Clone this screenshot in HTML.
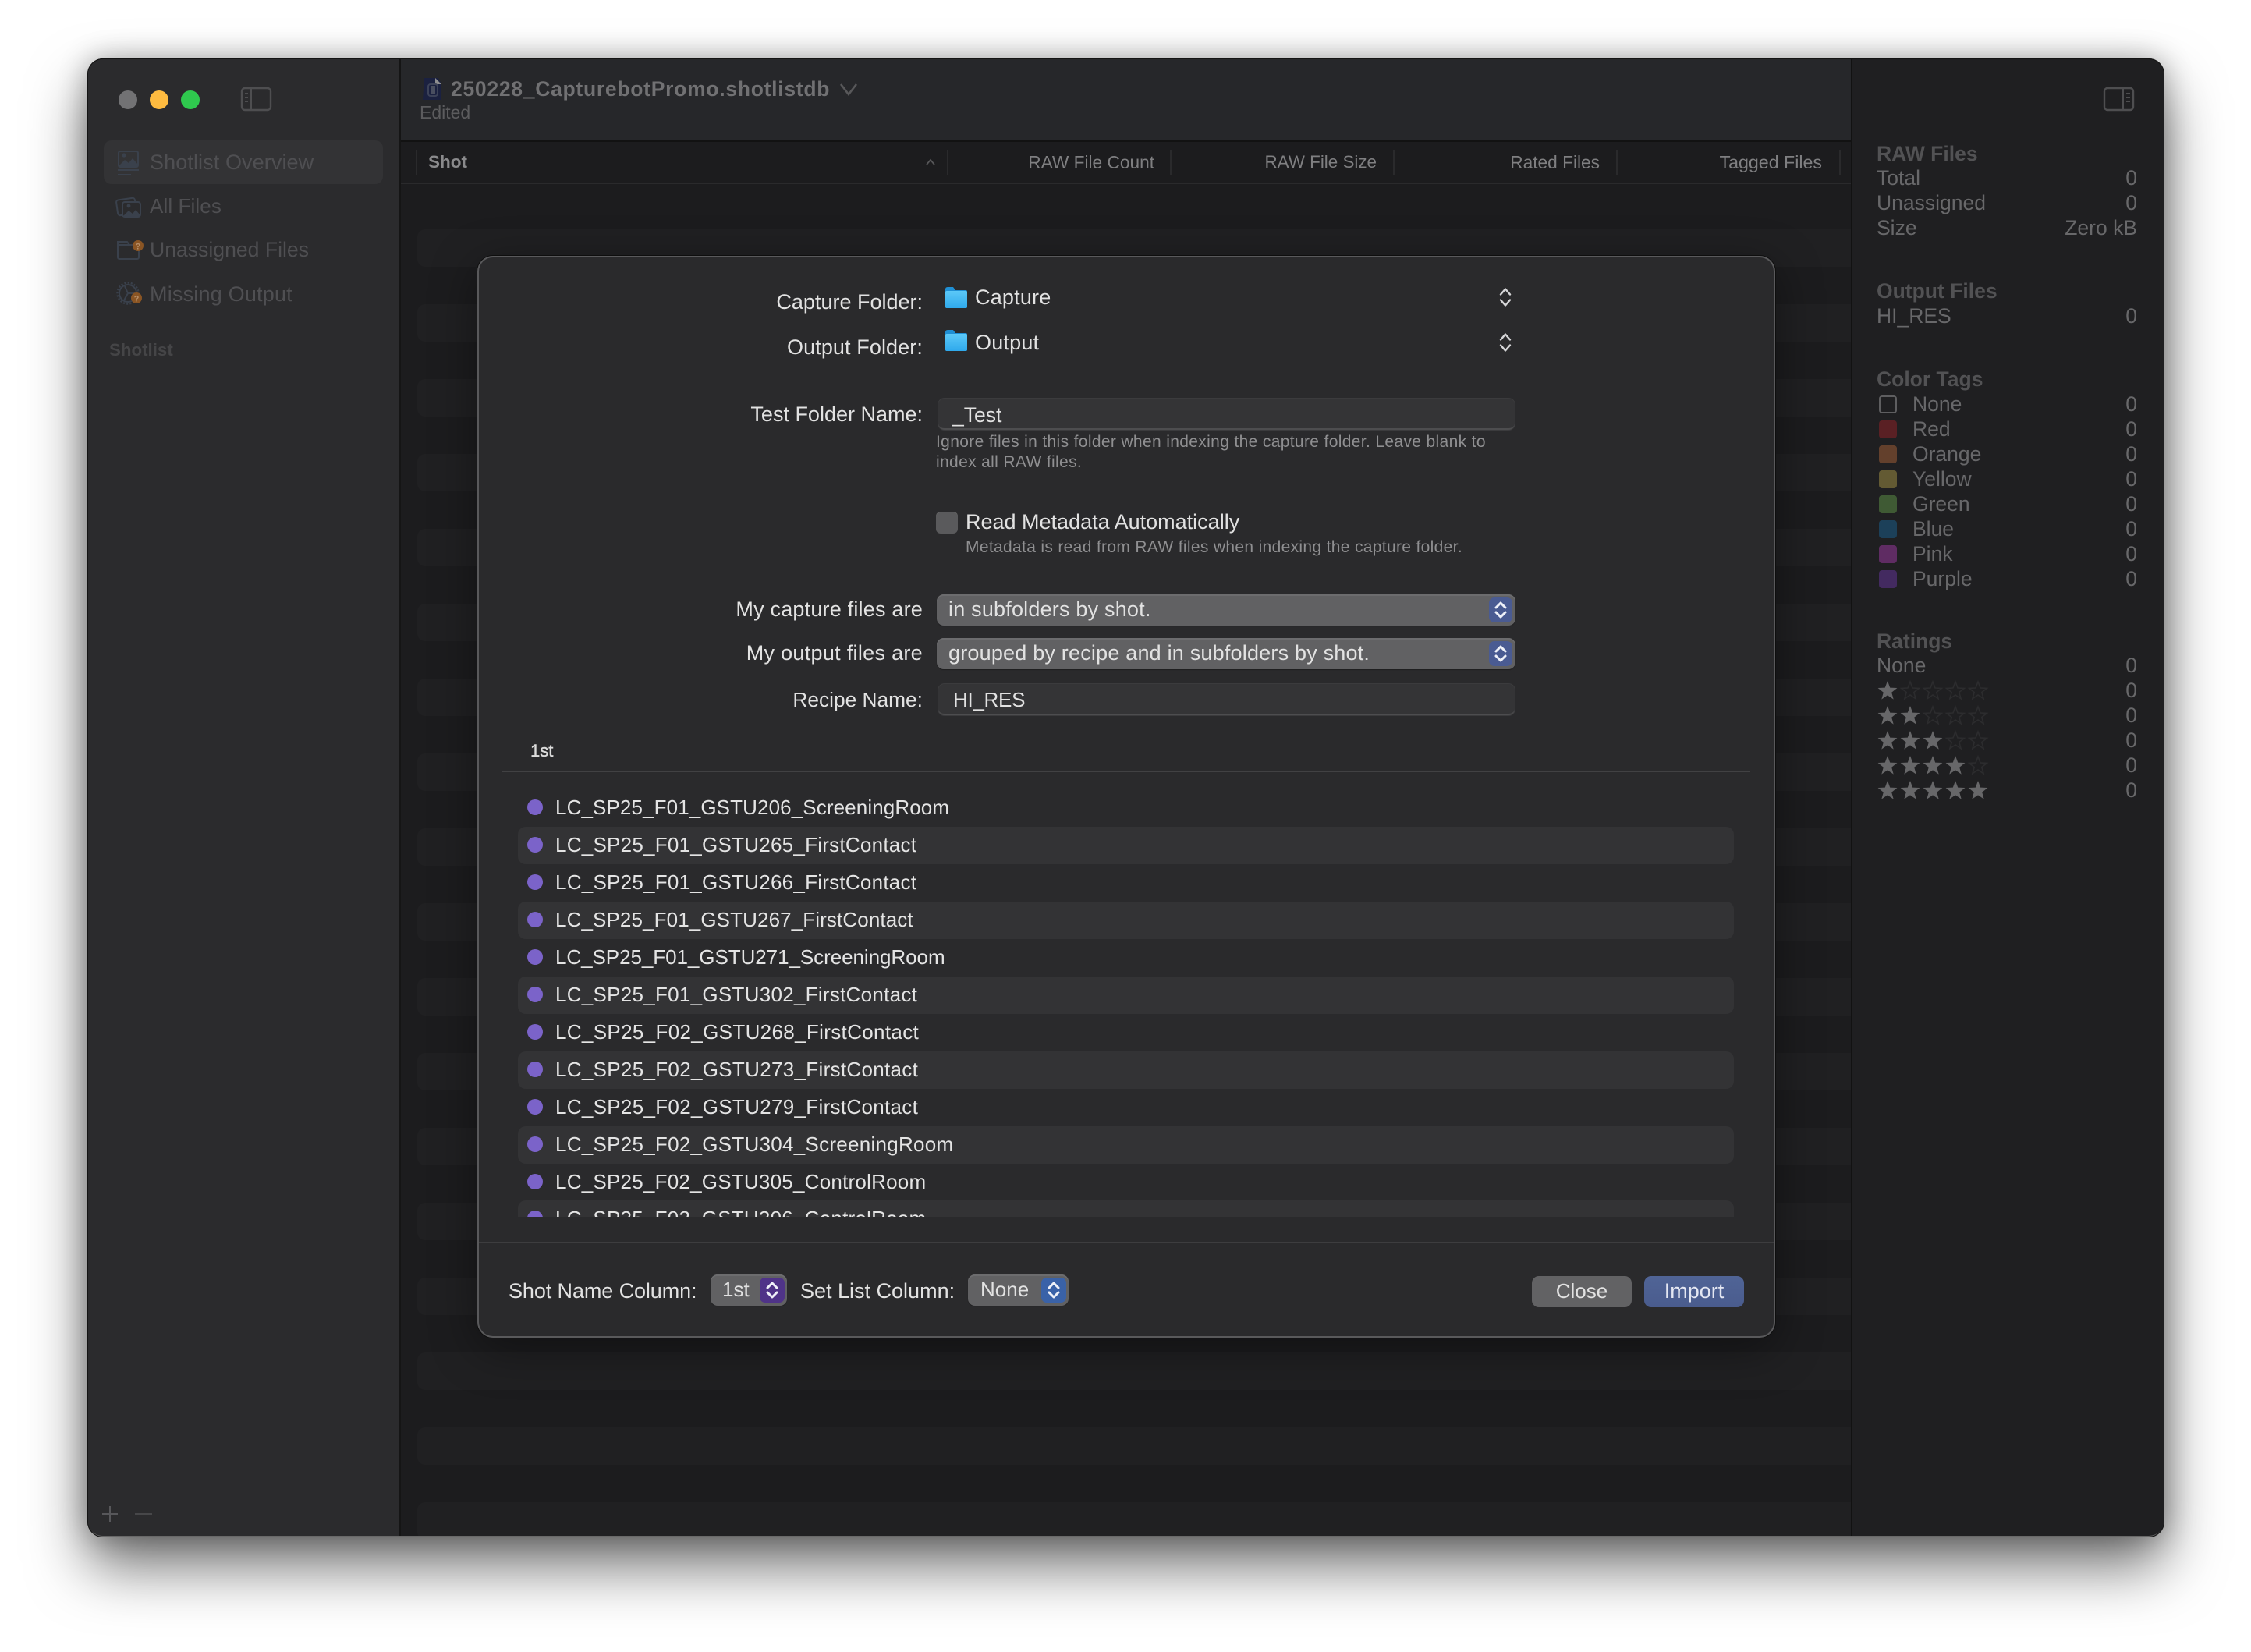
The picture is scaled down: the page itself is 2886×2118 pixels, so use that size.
<!DOCTYPE html>
<html><head><meta charset="utf-8"><title>Shotlist</title>
<style>
html,body{margin:0;padding:0;background:#fff;}
body{position:relative;width:2886px;height:2118px;overflow:hidden;font-family:"Liberation Sans",sans-serif;}
.abs{position:absolute;}
.t{position:absolute;white-space:nowrap;line-height:40px;height:40px;font-size:26px;}
.r{transform:translateX(-100%);}
#win{position:absolute;left:112px;top:75px;width:2663px;height:1896px;border-radius:20px;background:#1c1c1e;
box-shadow:0 38px 75px rgba(0,0,0,.55),0 0 36px rgba(0,0,0,.3);}
#clip{position:absolute;inset:0;border-radius:20px;overflow:hidden;}
#edge{position:absolute;inset:0;border-radius:20px;box-shadow:inset 0 0 0 1px #141414,inset 0 -3px 0 -1px #686868,inset 2px 0 0 -1px #555,inset -2px 0 0 -1px #555;}
#side{position:absolute;left:0;top:0;width:400px;height:100%;background:#2b2b2d;border-right:2px solid #151515;}
#bar{position:absolute;left:402px;top:0;width:1859px;height:105px;background:#26272a;border-bottom:2px solid #121212;}
#hdr{position:absolute;left:402px;top:107px;width:1859px;height:52px;background:#1c1c1e;border-bottom:2px solid #2a2a2c;}
#rp{position:absolute;left:2261px;top:0;width:402px;height:100%;background:#1f1f21;border-left:2px solid #121212;box-sizing:border-box;}
.st{position:absolute;left:423px;width:1838px;height:48px;background:#202022;border-radius:10px 0 0 10px;}
.sep{position:absolute;width:2px;height:32px;top:192px;background:#2a2a2c;}
.side{color:#4f4f52;font-size:27px;}
.hd{color:#7f7f81;font-size:22.7px;}
.rl{color:#68686a;font-size:26.5px;}
.rb{color:#525254;font-size:26.5px;font-weight:bold;}
.sw{position:absolute;left:2409px;width:23px;height:23px;border-radius:4px;}
#dlg{position:absolute;left:612px;top:328px;width:1664px;height:1387px;background:#2a2a2c;border-radius:20px;
box-shadow:0 0 0 1px #0e0e0e,inset 0 0 0 2px #59595b,0 14px 60px rgba(0,0,0,.4);}
.lb{color:#e2e2e2;font-size:27px;}
.field{position:absolute;left:1203px;width:739px;height:40px;box-sizing:border-box;background:#343436;border-radius:8px;border-bottom:2px solid #4d4d4f;box-shadow:0 0 0 1px #3b3b3d;}
.pop{position:absolute;height:40px;background:#616163;border-radius:9px;box-shadow:inset 0 2px 0 #6c6c6e,0 1px 1px rgba(0,0,0,.3);}
.btn{position:absolute;height:32px;top:4px;border-radius:7px;}
.sm{color:#8f8f91;font-size:21px;letter-spacing:.35px;}
#list{position:absolute;left:644px;top:1012px;width:1600px;height:548px;overflow:hidden;}
.row{position:absolute;left:20px;width:1559px;height:48px;border-radius:10px;}
.row.z{background:#333335;}
.row i{position:absolute;left:12px;top:13px;width:20px;height:20px;border-radius:50%;background:#7b63c9;}
.row span{position:absolute;left:48px;top:3px;line-height:40px;font-size:26px;color:#e4e4e4;white-space:nowrap;}
.ctl{position:absolute;left:0;top:0;}
</style></head>
<body>
<div id="win">
 <div id="clip">
  <div class="st" style="top:219px"></div><div class="st" style="top:315px"></div><div class="st" style="top:411px"></div><div class="st" style="top:507px"></div><div class="st" style="top:603px"></div><div class="st" style="top:699px"></div><div class="st" style="top:795px"></div><div class="st" style="top:891px"></div><div class="st" style="top:987px"></div><div class="st" style="top:1083px"></div><div class="st" style="top:1179px"></div><div class="st" style="top:1275px"></div><div class="st" style="top:1371px"></div><div class="st" style="top:1467px"></div><div class="st" style="top:1563px"></div><div class="st" style="top:1659px"></div><div class="st" style="top:1755px"></div><div class="st" style="top:1851px"></div>
  <div id="side"><div class="abs" style="left:21px;top:105px;width:358px;height:56px;background:#333335;border-radius:10px"></div></div>
  <div id="bar"></div>
  <div id="hdr"></div>
  <div id="rp"></div>
 </div>
 <div id="edge"></div>
</div>

<div class="t side" style="left:192px;top:188px;letter-spacing:.1px">Shotlist Overview</div>
<div class="t side" style="left:192px;top:244px;font-size:26px;letter-spacing:.1px">All Files</div>
<div class="t side" style="left:192px;top:300px;font-size:26.6px">Unassigned Files</div>
<div class="t side" style="left:192px;top:357px;letter-spacing:.2px">Missing Output</div>
<div class="t" style="left:140px;top:429px;font-size:22.3px;font-weight:bold;color:#454547">Shotlist</div>

<div class="t" style="left:578px;top:94px;font-weight:bold;color:#717173;font-size:26.5px;letter-spacing:.72px">250228_CapturebotPromo.shotlistdb</div>
<div class="t" style="left:538px;top:124px;font-size:23px;color:#5c5c5e">Edited</div>

<div class="sep" style="left:533px"></div><div class="sep" style="left:1214px"></div><div class="sep" style="left:1500px"></div><div class="sep" style="left:1786px"></div><div class="sep" style="left:2072px"></div><div class="sep" style="left:2358px"></div>
<div class="t" style="left:549px;top:188px;font-size:22.5px;font-weight:bold;color:#8a8a8c">Shot</div>
<div class="t hd r" style="left:1480px;top:188px">RAW File Count</div>
<div class="t hd r" style="left:1765px;top:188px;font-size:22.4px">RAW File Size</div>
<div class="t hd r" style="left:2051px;top:188px">Rated Files</div>
<div class="t hd r" style="left:2336px;top:188px;font-size:23.2px">Tagged Files</div>

<div class="t rb" style="left:2406px;top:177px">RAW Files</div>
<div class="t rl" style="left:2406px;top:208px">Total</div><div class="t rl r" style="left:2740px;top:208px">0</div>
<div class="t rl" style="left:2406px;top:240px">Unassigned</div><div class="t rl r" style="left:2740px;top:240px">0</div>
<div class="t rl" style="left:2406px;top:272px">Size</div><div class="t rl r" style="left:2740px;top:272px">Zero kB</div>
<div class="t rb" style="left:2406px;top:353px">Output Files</div>
<div class="t rl" style="left:2406px;top:385px">HI_RES</div><div class="t rl r" style="left:2740px;top:385px">0</div>
<div class="t rb" style="left:2406px;top:466px">Color Tags</div>
<div class="sw" style="top:507px;box-sizing:border-box;border:2px solid #5e5e60"></div><div class="t rl" style="left:2452px;top:498px">None</div><div class="t rl r" style="left:2740px;top:498px">0</div>
<div class="sw" style="top:539px;background:#5a2024"></div><div class="t rl" style="left:2452px;top:530px">Red</div><div class="t rl r" style="left:2740px;top:530px">0</div>
<div class="sw" style="top:571px;background:#63402c"></div><div class="t rl" style="left:2452px;top:562px">Orange</div><div class="t rl r" style="left:2740px;top:562px">0</div>
<div class="sw" style="top:603px;background:#635a33"></div><div class="t rl" style="left:2452px;top:594px">Yellow</div><div class="t rl r" style="left:2740px;top:594px">0</div>
<div class="sw" style="top:635px;background:#3f5a34"></div><div class="t rl" style="left:2452px;top:626px">Green</div><div class="t rl r" style="left:2740px;top:626px">0</div>
<div class="sw" style="top:667px;background:#1c4059"></div><div class="t rl" style="left:2452px;top:658px">Blue</div><div class="t rl r" style="left:2740px;top:658px">0</div>
<div class="sw" style="top:699px;background:#5f2c63"></div><div class="t rl" style="left:2452px;top:690px">Pink</div><div class="t rl r" style="left:2740px;top:690px">0</div>
<div class="sw" style="top:731px;background:#432a60"></div><div class="t rl" style="left:2452px;top:722px">Purple</div><div class="t rl r" style="left:2740px;top:722px">0</div>
<div class="t rb" style="left:2406px;top:802px">Ratings</div>
<div class="t rl" style="left:2406px;top:833px">None</div><div class="t rl r" style="left:2740px;top:833px">0</div>
<div class="t rl r" style="left:2740px;top:865px">0</div>
<div class="t rl r" style="left:2740px;top:897px">0</div>
<div class="t rl r" style="left:2740px;top:929px">0</div>
<div class="t rl r" style="left:2740px;top:961px">0</div>
<div class="t rl r" style="left:2740px;top:993px">0</div>

<div id="dlg"></div>
<div class="t lb r" style="left:1183px;top:367px">Capture Folder:</div>
<div class="t lb r" style="left:1183px;top:425px;letter-spacing:.1px">Output Folder:</div>
<div class="t lb" style="left:1250px;top:361px;letter-spacing:.2px">Capture</div>
<div class="t lb" style="left:1250px;top:419px;letter-spacing:.2px">Output</div>
<div class="t lb r" style="left:1183px;top:511px">Test Folder Name:</div>
<div class="field" style="top:511px"></div>
<div class="t lb" style="left:1221px;top:512px;font-size:26.5px">_Test</div>
<div class="t sm" style="left:1200px;top:547px">Ignore files in this folder when indexing the capture folder. Leave blank to</div>
<div class="t sm" style="left:1200px;top:573px">index all RAW files.</div>
<div class="abs" style="left:1200px;top:656px;width:28px;height:28px;border-radius:6px;background:#5a5a5c;box-shadow:inset 0 1px 0 #666"></div>
<div class="t lb" style="left:1238px;top:649px">Read Metadata Automatically</div>
<div class="t sm" style="left:1238px;top:682px;letter-spacing:.33px">Metadata is read from RAW files when indexing the capture folder.</div>

<div class="t lb r" style="left:1183px;top:761px;letter-spacing:.2px">My capture files are</div>
<div class="pop" style="left:1201px;top:762px;width:742px"><div class="btn" style="left:708px;width:30px;background:#4a5b92"></div></div>
<div class="t lb" style="left:1216px;top:761px;letter-spacing:.2px">in subfolders by shot.</div>
<div class="t lb r" style="left:1183px;top:817px;letter-spacing:.3px">My output files are</div>
<div class="pop" style="left:1201px;top:818px;width:742px"><div class="btn" style="left:708px;width:30px;background:#4a5b92"></div></div>
<div class="t lb" style="left:1216px;top:817px;letter-spacing:.2px">grouped by recipe and in subfolders by shot.</div>
<div class="t lb r" style="left:1183px;top:877px;font-size:26.3px">Recipe Name:</div>
<div class="field" style="top:877px"></div>
<div class="t lb" style="left:1222px;top:877px;font-size:26px;letter-spacing:-.3px">HI_RES</div>

<div class="t" style="left:680px;top:943px;font-size:22px;color:#dcdcdc;-webkit-text-stroke:.4px #dcdcdc">1st</div>
<div class="abs" style="left:644px;top:988px;width:1600px;height:2px;background:#414143"></div>

<div id="list">
<div class="row" style="top:0"><i></i><span style="letter-spacing:.11px">LC_SP25_F01_GSTU206_ScreeningRoom</span></div>
<div class="row z" style="top:48px"><i></i><span style="letter-spacing:.25px">LC_SP25_F01_GSTU265_FirstContact</span></div>
<div class="row" style="top:96px"><i></i><span style="letter-spacing:.25px">LC_SP25_F01_GSTU266_FirstContact</span></div>
<div class="row z" style="top:144px"><i></i><span style="letter-spacing:.11px">LC_SP25_F01_GSTU267_FirstContact</span></div>
<div class="row" style="top:192px"><i></i><span style="letter-spacing:-.06px">LC_SP25_F01_GSTU271_ScreeningRoom</span></div>
<div class="row z" style="top:240px"><i></i><span style="letter-spacing:.28px">LC_SP25_F01_GSTU302_FirstContact</span></div>
<div class="row" style="top:288px"><i></i><span style="letter-spacing:.34px">LC_SP25_F02_GSTU268_FirstContact</span></div>
<div class="row z" style="top:336px"><i></i><span style="letter-spacing:.31px">LC_SP25_F02_GSTU273_FirstContact</span></div>
<div class="row" style="top:384px"><i></i><span style="letter-spacing:.31px">LC_SP25_F02_GSTU279_FirstContact</span></div>
<div class="row z" style="top:432px"><i></i><span style="letter-spacing:.27px">LC_SP25_F02_GSTU304_ScreeningRoom</span></div>
<div class="row" style="top:480px"><i></i><span style="letter-spacing:.23px">LC_SP25_F02_GSTU305_ControlRoom</span></div>
<div class="row z" style="top:527px"><i></i><span style="letter-spacing:.23px">LC_SP25_F02_GSTU306_ControlRoom</span></div>
</div>

<div class="abs" style="left:614px;top:1592px;width:1660px;height:2px;background:#3d3d3f"></div>
<div class="t lb" style="left:652px;top:1635px;letter-spacing:-.1px">Shot Name Column:</div>
<div class="pop" style="left:911px;top:1634px;width:98px"><div class="btn" style="left:63px;width:32px;background:#4f3388"></div></div>
<div class="t lb" style="left:926px;top:1633px;font-size:26px">1st</div>
<div class="t lb" style="left:1026px;top:1635px">Set List Column:</div>
<div class="pop" style="left:1241px;top:1634px;width:129px"><div class="btn" style="left:94px;width:32px;background:#3a62a8"></div></div>
<div class="t lb" style="left:1257px;top:1633px;font-size:26px">None</div>
<div class="abs" style="left:1964px;top:1636px;width:128px;height:40px;border-radius:9px;background:#626264"></div>
<div class="t" style="left:1964px;top:1635px;width:128px;text-align:center;color:#e2e2e2">Close</div>
<div class="abs" style="left:2108px;top:1636px;width:128px;height:40px;border-radius:9px;background:linear-gradient(#506496,#4a5c8e)"></div>
<div class="t" style="left:2108px;top:1635px;width:128px;text-align:center;color:#e4e7f2;font-size:27px">Import</div>

<svg class="ctl" width="2886" height="2118" viewBox="0 0 2886 2118" fill="none">
 <circle cx="164" cy="128" r="12" fill="#727274"/>
 <circle cx="204" cy="128" r="12" fill="#febb40"/>
 <circle cx="244" cy="128" r="12" fill="#2fc94e"/>
 <rect x="310" y="113" width="37" height="28" rx="4" stroke="#4e4e50" stroke-width="2.4"/>
 <path d="M322 113v28M314 120h4M314 125h4M314 130h4" stroke="#4e4e50" stroke-width="2"/>
 <rect x="2698" y="113" width="37" height="28" rx="4" stroke="#4e4e50" stroke-width="2.4"/>
 <path d="M2722 113v28M2726 120h5M2726 125h5M2726 130h5" stroke="#4e4e50" stroke-width="2"/>

 <path d="M544 100h18l4 8v20h-24z" fill="#1b2140"/><path d="M558 100l8 8h-8z" fill="#8e8e90"/>
 <rect x="549" y="108" width="12" height="15" rx="3" stroke="#3c4258" stroke-width="2"/><rect x="552" y="110" width="6" height="11" fill="#4a4f60"/>
 <path d="M1078 108l10 13 10-13" stroke="#58585a" stroke-width="2.6"/>
 <path d="M1188 211l5-6 5 6" stroke="#565658" stroke-width="1.8"/>

 <g stroke="#3a414c" stroke-width="2">
  <rect x="152" y="194" width="25" height="20" rx="2"/>
  <path d="M151 218h27M151 224h17"/>
  <rect x="150" y="255" width="24" height="20" rx="3" transform="rotate(-8 162 265)"/>
 </g>
 <path d="M152 213l8-8 5 4 5-6 7 8v3h-25z" fill="#3a414c"/><circle cx="159" cy="199" r="2.6" fill="#3a414c"/>
 <rect x="157" y="259" width="23" height="19" rx="3" fill="#2b2b2d" stroke="#3a414c" stroke-width="2"/>
 <path d="M158 277l7-7 5 4 4-5 6 7v2z" fill="#3a414c"/><circle cx="165" cy="264" r="2.4" fill="#3a414c"/>
 <path d="M151 314v-4h12l3 4h12v16a2 2 0 0 1-2 2h-23a2 2 0 0 1-2-2zM151 314h27" stroke="#3a414c" stroke-width="2"/>
 <circle cx="177" cy="315" r="7" fill="#8a5524"/>
 <text x="177" y="319.5" fill="#b8906a" font-size="11" font-weight="bold" text-anchor="middle" font-family="Liberation Sans">?</text>
 <circle cx="164" cy="376" r="11" stroke="#3a414c" stroke-width="2"/>
 <circle cx="164" cy="376" r="13.5" stroke="#3a414c" stroke-width="2.4" stroke-dasharray="2 2.2"/>
 <path d="M164 376l-4-9M164 376l9 0M164 376l-5 9" stroke="#3a414c" stroke-width="2"/>
 <circle cx="175" cy="382" r="7" fill="#8a5524"/>
 <text x="175" y="386.5" fill="#b8906a" font-size="11" font-weight="bold" text-anchor="middle" font-family="Liberation Sans">?</text>
 <path d="M131 1941h20M141 1931v20" stroke="#57575a" stroke-width="2"/>
 <path d="M173 1941h22" stroke="#474749" stroke-width="2"/>

 <g fill="#676769">
  <polygon transform="translate(2420 886)" points="0,-13 3.2,-4.4 12.4,-4 5.2,1.7 7.7,10.6 0,5.4 -7.7,10.6 -5.2,1.7 -12.4,-4 -3.2,-4.4"/>
  <polygon transform="translate(2420 918)" points="0,-13 3.2,-4.4 12.4,-4 5.2,1.7 7.7,10.6 0,5.4 -7.7,10.6 -5.2,1.7 -12.4,-4 -3.2,-4.4"/>
  <polygon transform="translate(2449 918)" points="0,-13 3.2,-4.4 12.4,-4 5.2,1.7 7.7,10.6 0,5.4 -7.7,10.6 -5.2,1.7 -12.4,-4 -3.2,-4.4"/>
  <polygon transform="translate(2420 950)" points="0,-13 3.2,-4.4 12.4,-4 5.2,1.7 7.7,10.6 0,5.4 -7.7,10.6 -5.2,1.7 -12.4,-4 -3.2,-4.4"/>
  <polygon transform="translate(2449 950)" points="0,-13 3.2,-4.4 12.4,-4 5.2,1.7 7.7,10.6 0,5.4 -7.7,10.6 -5.2,1.7 -12.4,-4 -3.2,-4.4"/>
  <polygon transform="translate(2478 950)" points="0,-13 3.2,-4.4 12.4,-4 5.2,1.7 7.7,10.6 0,5.4 -7.7,10.6 -5.2,1.7 -12.4,-4 -3.2,-4.4"/>
  <polygon transform="translate(2420 982)" points="0,-13 3.2,-4.4 12.4,-4 5.2,1.7 7.7,10.6 0,5.4 -7.7,10.6 -5.2,1.7 -12.4,-4 -3.2,-4.4"/>
  <polygon transform="translate(2449 982)" points="0,-13 3.2,-4.4 12.4,-4 5.2,1.7 7.7,10.6 0,5.4 -7.7,10.6 -5.2,1.7 -12.4,-4 -3.2,-4.4"/>
  <polygon transform="translate(2478 982)" points="0,-13 3.2,-4.4 12.4,-4 5.2,1.7 7.7,10.6 0,5.4 -7.7,10.6 -5.2,1.7 -12.4,-4 -3.2,-4.4"/>
  <polygon transform="translate(2507 982)" points="0,-13 3.2,-4.4 12.4,-4 5.2,1.7 7.7,10.6 0,5.4 -7.7,10.6 -5.2,1.7 -12.4,-4 -3.2,-4.4"/>
  <polygon transform="translate(2420 1014)" points="0,-13 3.2,-4.4 12.4,-4 5.2,1.7 7.7,10.6 0,5.4 -7.7,10.6 -5.2,1.7 -12.4,-4 -3.2,-4.4"/>
  <polygon transform="translate(2449 1014)" points="0,-13 3.2,-4.4 12.4,-4 5.2,1.7 7.7,10.6 0,5.4 -7.7,10.6 -5.2,1.7 -12.4,-4 -3.2,-4.4"/>
  <polygon transform="translate(2478 1014)" points="0,-13 3.2,-4.4 12.4,-4 5.2,1.7 7.7,10.6 0,5.4 -7.7,10.6 -5.2,1.7 -12.4,-4 -3.2,-4.4"/>
  <polygon transform="translate(2507 1014)" points="0,-13 3.2,-4.4 12.4,-4 5.2,1.7 7.7,10.6 0,5.4 -7.7,10.6 -5.2,1.7 -12.4,-4 -3.2,-4.4"/>
  <polygon transform="translate(2536 1014)" points="0,-13 3.2,-4.4 12.4,-4 5.2,1.7 7.7,10.6 0,5.4 -7.7,10.6 -5.2,1.7 -12.4,-4 -3.2,-4.4"/>
 </g>
 <g stroke="#2c2c2e" stroke-width="1.6">
  <polygon transform="translate(2449 886)" points="0,-12 3,-4 11.4,-3.6 4.8,1.5 7.1,9.8 0,5 -7.1,9.8 -4.8,1.5 -11.4,-3.6 -3,-4"/>
  <polygon transform="translate(2478 886)" points="0,-12 3,-4 11.4,-3.6 4.8,1.5 7.1,9.8 0,5 -7.1,9.8 -4.8,1.5 -11.4,-3.6 -3,-4"/>
  <polygon transform="translate(2507 886)" points="0,-12 3,-4 11.4,-3.6 4.8,1.5 7.1,9.8 0,5 -7.1,9.8 -4.8,1.5 -11.4,-3.6 -3,-4"/>
  <polygon transform="translate(2536 886)" points="0,-12 3,-4 11.4,-3.6 4.8,1.5 7.1,9.8 0,5 -7.1,9.8 -4.8,1.5 -11.4,-3.6 -3,-4"/>
  <polygon transform="translate(2478 918)" points="0,-12 3,-4 11.4,-3.6 4.8,1.5 7.1,9.8 0,5 -7.1,9.8 -4.8,1.5 -11.4,-3.6 -3,-4"/>
  <polygon transform="translate(2507 918)" points="0,-12 3,-4 11.4,-3.6 4.8,1.5 7.1,9.8 0,5 -7.1,9.8 -4.8,1.5 -11.4,-3.6 -3,-4"/>
  <polygon transform="translate(2536 918)" points="0,-12 3,-4 11.4,-3.6 4.8,1.5 7.1,9.8 0,5 -7.1,9.8 -4.8,1.5 -11.4,-3.6 -3,-4"/>
  <polygon transform="translate(2507 950)" points="0,-12 3,-4 11.4,-3.6 4.8,1.5 7.1,9.8 0,5 -7.1,9.8 -4.8,1.5 -11.4,-3.6 -3,-4"/>
  <polygon transform="translate(2536 950)" points="0,-12 3,-4 11.4,-3.6 4.8,1.5 7.1,9.8 0,5 -7.1,9.8 -4.8,1.5 -11.4,-3.6 -3,-4"/>
  <polygon transform="translate(2536 982)" points="0,-12 3,-4 11.4,-3.6 4.8,1.5 7.1,9.8 0,5 -7.1,9.8 -4.8,1.5 -11.4,-3.6 -3,-4"/>
 </g>

 <defs><linearGradient id="fg" x1="0" y1="0" x2="0" y2="1"><stop offset="0" stop-color="#5cc9f8"/><stop offset="1" stop-color="#2fa9ec"/></linearGradient></defs>
 <path d="M1212 371q0-3 3-3h7l3 4h13q2 0 2 2v19q0 2-2 2h-24q-2 0-2-2z" fill="#1f8fd4"/>
 <path d="M1212 375q0-2 2-2h24q2 0 2 2v18q0 2-2 2h-24q-2 0-2-2z" fill="url(#fg)"/>
 <path d="M1212 426q0-3 3-3h7l3 4h13q2 0 2 2v19q0 2-2 2h-24q-2 0-2-2z" fill="#1f8fd4"/>
 <path d="M1212 430q0-2 2-2h24q2 0 2 2v18q0 2-2 2h-24q-2 0-2-2z" fill="url(#fg)"/>
 <g stroke="#d6d6d8" stroke-width="2.4" stroke-linecap="round" stroke-linejoin="round">
  <path d="M1924 377.5l6-7 6 7M1924 384.5l6 7 6-7"/>
  <path d="M1924 435.5l6-7 6 7M1924 442.5l6 7 6-7"/>
 </g>
 <g stroke="#eef0f8" stroke-width="3" stroke-linecap="round" stroke-linejoin="round">
  <path d="M1918 779l6-6 6 6M1918 785l6 6 6-6"/>
  <path d="M1918 835l6-6 6 6M1918 841l6 6 6-6"/>
  <path d="M984 1651l6-6 6 6M984 1657l6 6 6-6"/>
  <path d="M1345 1651l6-6 6 6M1345 1657l6 6 6-6"/>
 </g>
</svg>
</body></html>
